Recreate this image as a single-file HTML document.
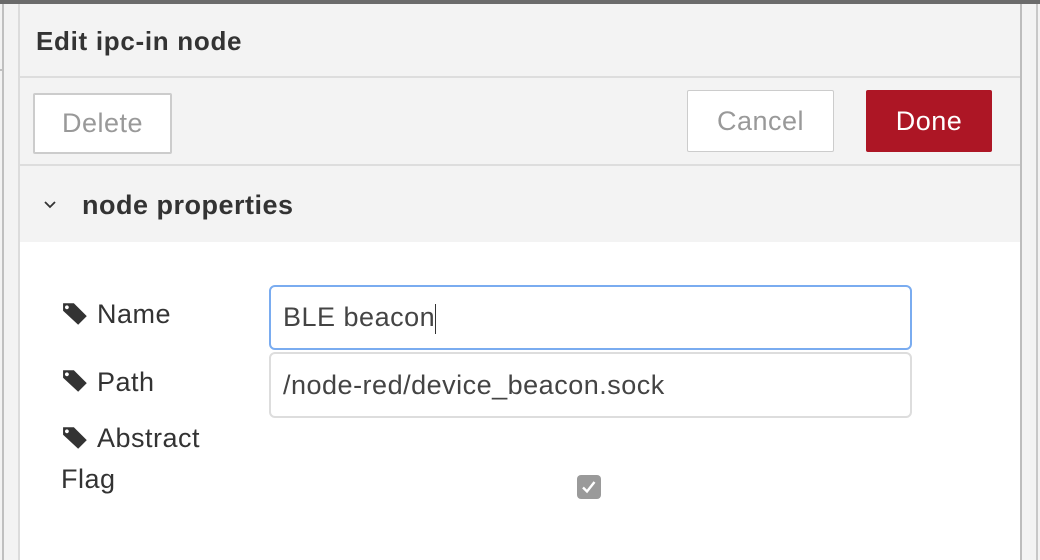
<!DOCTYPE html>
<html><head><style>
*{box-sizing:border-box;margin:0;padding:0}
body{width:1040px;height:560px;overflow:hidden;background:#f3f3f3;font-family:"Liberation Sans",sans-serif;position:relative;color:#333}
.a{position:absolute}
.l{font-size:27px;letter-spacing:0.5px}
</style></head><body>
<div class="a" style="left:0;top:0;width:1040px;height:4px;background:#6b6b6b"></div>
<div class="a" style="left:2px;top:4px;width:2px;height:556px;background:#c0c0c0"></div>
<div class="a" style="left:0;top:69px;width:3px;height:2px;background:#c0c0c0"></div>
<div class="a" style="left:18px;top:4px;width:2px;height:556px;background:#dcdcdc"></div>
<div class="a" style="left:1020px;top:4px;width:2px;height:556px;background:#bdbdbd"></div>
<div class="a" style="left:1036px;top:4px;width:2px;height:556px;background:#c8c8c8"></div>
<div class="a" style="left:20px;top:4px;width:1000px;height:556px;background:#f3f3f3"></div>
<div class="a" style="left:36px;top:26px;font-size:26px;letter-spacing:0.7px;font-weight:bold;color:#333">Edit ipc-in node</div>
<div class="a" style="left:20px;top:76px;width:1000px;height:2px;background:#ddd"></div>
<div class="a l" style="left:33px;top:93px;width:139px;height:61px;background:#fff;border:2px solid #ccc;border-radius:2px;color:#999;text-align:center;line-height:57px">Delete</div>
<div class="a l" style="left:687px;top:90px;width:147px;height:62px;background:#fff;border:1px solid #ccc;border-radius:2px;color:#999;text-align:center;line-height:60px">Cancel</div>
<div class="a l" style="left:866px;top:90px;width:126px;height:62px;background:#ad1625;border-radius:2px;color:#fff;text-align:center;line-height:62px">Done</div>
<div class="a" style="left:20px;top:164px;width:1000px;height:2px;background:#ddd"></div>
<svg class="a" style="left:43px;top:200px" width="14" height="10" viewBox="0 0 14 10"><path d="M2 2L7 7L12 2" fill="none" stroke="#333" stroke-width="1.8"/></svg>
<div class="a" style="left:82px;top:190px;font-size:27px;letter-spacing:0.5px;font-weight:bold;color:#333">node properties</div>
<div class="a" style="left:20px;top:242px;width:1000px;height:318px;background:#fff"></div>
<svg class="a" style="left:62px;top:302px" width="28" height="24" viewBox="0 0 26 22"><path d="M1 1H11L23 13L15 21L1 8Z M4.5 3a1.8 1.8 0 1 0 0.1 0Z" fill="#333" fill-rule="evenodd"/></svg>
<div class="a l" style="left:97px;top:299px">Name</div>
<svg class="a" style="left:62px;top:369px" width="28" height="24" viewBox="0 0 26 22"><path d="M1 1H11L23 13L15 21L1 8Z M4.5 3a1.8 1.8 0 1 0 0.1 0Z" fill="#333" fill-rule="evenodd"/></svg>
<div class="a l" style="left:97px;top:367px">Path</div>
<svg class="a" style="left:62px;top:426px" width="28" height="24" viewBox="0 0 26 22"><path d="M1 1H11L23 13L15 21L1 8Z M4.5 3a1.8 1.8 0 1 0 0.1 0Z" fill="#333" fill-rule="evenodd"/></svg>
<div class="a l" style="left:97px;top:423px">Abstract</div>
<div class="a l" style="left:61px;top:464px">Flag</div>
<div class="a l" style="left:269px;top:285px;width:643px;height:65px;border:2px solid #7aacf0;border-radius:6px;background:#fff;line-height:61px;padding-left:12px;color:#444">BLE beacon<span style="display:inline-block;width:1px;height:30px;background:#333;vertical-align:middle"></span></div>
<div class="a l" style="left:269px;top:352px;width:643px;height:66px;border:2px solid #ddd;border-radius:6px;background:#fff;line-height:62px;padding-left:12px;color:#444">/node-red/device_beacon.sock</div>
<div class="a" style="left:577px;top:475px;width:24px;height:24px;background:#9a9a9a;border-radius:4px"></div>
<svg class="a" style="left:577px;top:475px" width="24" height="24" viewBox="0 0 24 24"><path d="M6 12.5L10 16.5L17.5 7" fill="none" stroke="#fff" stroke-width="2.4"/></svg>
</body></html>
